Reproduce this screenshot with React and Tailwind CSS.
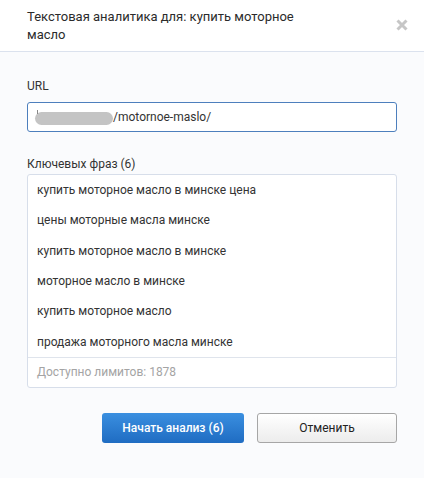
import React from "react";

const phrases = [
  "купить моторное масло в минске цена",
  "цены моторные масла минске",
  "купить моторное масло в минске",
  "моторное масло в минске",
  "купить моторное масло",
  "продажа моторного масла минске",
];

export default function App() {
  return (
    <div
      className="flex h-[478px] w-[424px] flex-col bg-[#fafbfd] text-[#333]"
      style={{ fontFamily: "Roboto, 'Liberation Sans', sans-serif" }}
    >
      {/* header */}
      <div className="flex h-[52px] items-start justify-between border-b border-[#dbe2ee] bg-white pl-[27px] pr-[16px] pt-[8px]">
        <h1 className="w-[290px] text-[13px] leading-[17.5px] font-normal text-[#2b2b2b]">
          Текстовая аналитика для: купить моторное масло
        </h1>
        <button className="mt-[11px] text-[#c6c6c6]">
          <svg width="12" height="12" viewBox="0 0 12 12">
            <path d="M1.5 1.5 L10.5 10.5 M10.5 1.5 L1.5 10.5" stroke="currentColor" strokeWidth="3" />
          </svg>
        </button>
      </div>

      {/* body */}
      <div className="flex flex-col px-[27px] pt-[26px]">
        <label className="text-[12px] leading-[16px] text-[#333]">URL</label>
        <div className="mt-[8px] flex h-[30px] items-center rounded-[3px] border border-[#4d7fbd] bg-white pl-[7px] text-[12px]">
          <span className="relative mt-[3px] h-[13px] w-[78px] rounded-full bg-[#c4c4c4]">
            <span className="absolute left-[2px] top-[-2px] h-[4px] w-[1px] bg-[#888]" />
          </span>
          <span className="text-[#333]">/motornoe-maslo/</span>
        </div>

        <label className="mt-[24px] text-[12px] leading-[16px] text-[#333]">Ключевых фраз (6)</label>
        <div className="mt-[2px] flex flex-col rounded-[3px] border border-[#d7deea] bg-white">
          {phrases.map((p) => (
            <div key={p} className="flex h-[30.3px] items-center pl-[9px] text-[12px] text-[#333]">
              {p}
            </div>
          ))}
          <div className="flex h-[30px] items-center border-t border-[#dfe4ec] pl-[9px] text-[12px] text-[#a4a4a4]">
            Доступно лимитов: 1878
          </div>
        </div>

        {/* actions */}
        <div className="mt-[25px] flex justify-end gap-[13px]">
          <button className="h-[30px] w-[142px] rounded-[3px] bg-gradient-to-b from-[#3a8fe0] to-[#1f6cc2] text-[12px] font-medium text-white">
            Начать анализ (6)
          </button>
          <button className="h-[30px] w-[140px] rounded-[3px] border border-[#a6a6a6] bg-gradient-to-b from-white to-[#ececec] text-[12px] text-[#222]">
            Отменить
          </button>
        </div>
      </div>
    </div>
  );
}
